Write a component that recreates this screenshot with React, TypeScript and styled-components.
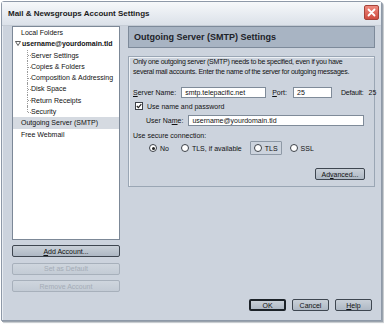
import React from 'react';
import styled, { createGlobalStyle, css } from 'styled-components';

const GlobalStyle = createGlobalStyle`
  html, body {
    margin: 0;
    padding: 0;
    background: #ffffff;
  }
  body {
    font-family: 'Liberation Sans', Arial, sans-serif;
    font-size: 7px;
    color: #111111;
  }
`;

const treeItems = [
  { label: 'Server Settings' },
  { label: 'Copies & Folders' },
  { label: 'Composition & Addressing' },
  { label: 'Disk Space' },
  { label: 'Return Receipts' },
  { label: 'Security' },
];

const radios = [
  { label: 'No', checked: true },
  { label: 'TLS, if available' },
  { label: 'TLS', focused: true },
  { label: 'SSL' },
];

export default function App() {
  return (
    <>
      <GlobalStyle />
      <Screen>
        <Window>
          <TitleBar>
            <Title>Mail &amp; Newsgroups Account Settings</Title>
            <CloseButton aria-label="Close">
              <svg width="9" height="9" viewBox="0 0 9 9">
                <path d="M1.5 1.5 L7.5 7.5 M7.5 1.5 L1.5 7.5" stroke="#ffffff" strokeWidth="1.8" strokeLinecap="round" />
              </svg>
            </CloseButton>
          </TitleBar>

          <Body>
            <Columns>
              <LeftColumn>
                <Tree>
                  <TreeRow>Local Folders</TreeRow>
                  <TreeRow $bold>
                    <Twisty>
                      <svg width="6" height="5" viewBox="0 0 6 5">
                        <path d="M0.5 0.5 H5.5 L3 4.5 Z" fill="none" stroke="#333" strokeWidth="0.8" />
                      </svg>
                    </Twisty>
                    username@yourdomain.tld
                  </TreeRow>
                  <Children>
                    {treeItems.map((item, i) => (
                      <ChildRow key={i} $last={i === treeItems.length - 1}>
                        {item.label}
                      </ChildRow>
                    ))}
                  </Children>
                  <TreeRow $selected>Outgoing Server (SMTP)</TreeRow>
                  <TreeRow>Free Webmail</TreeRow>
                </Tree>
                <SideButtons>
                  <Button $width={108}><u>A</u>dd Account...</Button>
                  <Button $width={108} $disabled>Set as Default</Button>
                  <Button $width={108} $disabled>Remove Account</Button>
                </SideButtons>
              </LeftColumn>

              <RightColumn>
                <Header>Outgoing Server (SMTP) Settings</Header>
                <GroupBox>
                  <Intro>
                    Only one outgoing server (SMTP) needs to be specified, even if you have
                    <br />
                    several mail accounts. Enter the name of the server for outgoing messages.
                  </Intro>
                  <FieldRow>
                    <Label><u>S</u>erver Name:</Label>
                    <TextField $width={85} $left={5}>smtp.telepacific.net</TextField>
                    <Label $left={6}><u>P</u>ort:</Label>
                    <TextField $width={39} $left={6}>25</TextField>
                    <Label $left={9} $tight>Default:</Label>
                    <Label $left={5}>25</Label>
                  </FieldRow>
                  <CheckRow>
                    <CheckBox>
                      <svg width="6" height="6" viewBox="0 0 6 6">
                        <path d="M0.8 3 L2.4 4.6 L5.3 1.2" fill="none" stroke="#222" strokeWidth="1.2" />
                      </svg>
                    </CheckBox>
                    Use name and password
                  </CheckRow>
                  <UserRow>
                    <Label>User Na<u>m</u>e:</Label>
                    <TextField $grow $left={5}>username@yourdomain.tld</TextField>
                  </UserRow>
                  <SectionLabel>Use secure connection:</SectionLabel>
                  <RadioRow>
                    {radios.map((r, i) => (
                      <RadioItem key={i} $focused={r.focused}>
                        <RadioCircle $checked={r.checked} />
                        {r.label}
                      </RadioItem>
                    ))}
                  </RadioRow>
                  <AdvancedRow>
                    <Button $width={50}>Ad<u>v</u>anced...</Button>
                  </AdvancedRow>
                </GroupBox>
              </RightColumn>
            </Columns>

            <Footer>
              <Button $width={37} $default>OK</Button>
              <Button $width={37}>Cancel</Button>
              <Button $width={37}><u>H</u>elp</Button>
            </Footer>
          </Body>
        </Window>
      </Screen>
    </>
  );
}

const Screen = styled.div`
  width: 384px;
  height: 324px;
  padding: 1px 0 0 1px;
  box-sizing: border-box;
  overflow: hidden;
`;

const Window = styled.div`
  width: 381px;
  height: 320px;
  box-sizing: border-box;
  display: flex;
  flex-direction: column;
  background: #ccd3dd;
  border: 1px solid #8e99a8;
  border-radius: 3px 3px 0 0;
  box-shadow: inset 1px 0 0 #e8ecf1, 1px 1px 0 #9aa3ad, 2px 2px 1px #c4c8cd;
`;

const TitleBar = styled.div`
  height: 23px;
  flex-shrink: 0;
  display: flex;
  align-items: center;
  justify-content: space-between;
  padding: 0 2px 0 6px;
  background: linear-gradient(#f6f8fa, #dbe1e9);
  border-bottom: 1px solid #c5ccd5;
`;

const Title = styled.div`
  font-weight: bold;
  font-size: 8px;
  color: #1b1b1b;
  margin-top: -1px;
`;

const CloseButton = styled.div`
  width: 15px;
  height: 15px;
  margin-top: -2px;
  box-sizing: border-box;
  display: flex;
  align-items: center;
  justify-content: center;
  border: 1px solid #a5433a;
  border-radius: 2px;
  background: linear-gradient(#ee8a7f, #cf4b3f);
`;

const Body = styled.div`
  flex: 1;
  display: flex;
  flex-direction: column;
  padding: 0 6px 9px 10px;
`;

const Columns = styled.div`
  display: flex;
  gap: 8px;
`;

const LeftColumn = styled.div`
  width: 108px;
  flex-shrink: 0;
  display: flex;
  flex-direction: column;
`;

const Tree = styled.div`
  height: 214px;
  box-sizing: border-box;
  background: #ffffff;
  border: 1px solid #7c8897;
  display: flex;
  flex-direction: column;
`;

const TreeRow = styled.div<{ $bold?: boolean; $selected?: boolean }>`
  height: 11.3px;
  line-height: 11.3px;
  display: flex;
  align-items: center;
  padding-left: ${(p) => (p.$bold ? 2 : 8)}px;
  white-space: nowrap;
  font-weight: ${(p) => (p.$bold ? 'bold' : 'normal')};
  ${(p) =>
    p.$selected &&
    css`
      background: #d5dae1;
    `}
`;

const Twisty = styled.span`
  display: inline-flex;
  width: 6px;
  margin-right: 1px;
`;

const Children = styled.div`
  display: flex;
  flex-direction: column;
  margin-left: 14px;
`;

const ChildRow = styled.div<{ $last?: boolean }>`
  position: relative;
  height: 11.3px;
  line-height: 11.3px;
  padding-left: 4px;
  white-space: nowrap;

  &::before {
    content: '';
    position: absolute;
    left: 0;
    top: 0;
    height: ${(p) => (p.$last ? '50%' : '100%')};
    border-left: 1px dotted #9a9a9a;
  }
  &::after {
    content: '';
    position: absolute;
    left: 1px;
    top: 50%;
    width: 3px;
    border-top: 1px dotted #9a9a9a;
  }
`;

const SideButtons = styled.div`
  display: flex;
  flex-direction: column;
  gap: 5.5px;
  margin-top: 5px;
`;

const Button = styled.div<{ $width: number; $disabled?: boolean; $default?: boolean }>`
  height: 12px;
  box-sizing: border-box;
  display: flex;
  align-items: center;
  justify-content: center;
  width: ${(p) => p.$width}px;
  border: 1px solid #3e4650;
  border-radius: 2px;
  background: linear-gradient(#c9d0d8, #aeb8c4);
  color: #111;
  font-size: 7px;
  white-space: nowrap;
  ${(p) =>
    p.$disabled &&
    css`
      border-color: #a7b0bb;
      color: #a5adb7;
      background: linear-gradient(#cfd6de, #c3cbd5);
    `}
  ${(p) =>
    p.$default &&
    css`
      border: 2px solid #1c2228;
    `}
`;

const RightColumn = styled.div`
  flex: 1;
  min-width: 0;
  display: flex;
  flex-direction: column;
  gap: 8px;
`;

const Header = styled.div`
  height: 22px;
  box-sizing: border-box;
  display: flex;
  align-items: center;
  padding-left: 5px;
  background: #a8b4c3;
  border: 1px solid #7d8a9a;
  font-weight: bold;
  font-size: 9px;
  color: #1d2229;
`;

const GroupBox = styled.div`
  height: 131px;
  box-sizing: border-box;
  border: 1px solid #9aa6b4;
  box-shadow: inset 1px 1px 0 #eef1f5;
  padding: 0 2px 0 4px;
  display: flex;
  flex-direction: column;
`;

const Intro = styled.div`
  line-height: 10px;
  letter-spacing: -0.25px;
  white-space: nowrap;
`;

const FieldRow = styled.div`
  display: flex;
  align-items: center;
  margin-top: 10px;
`;

const Label = styled.span<{ $left?: number; $tight?: boolean }>`
  flex-shrink: 0;
  white-space: nowrap;
  margin-left: ${(p) => p.$left ?? 0}px;
  ${(p) => p.$tight && 'letter-spacing: -0.2px;'}
`;

const TextField = styled.div<{ $width?: number; $grow?: boolean; $left?: number }>`
  height: 11px;
  box-sizing: border-box;
  flex-shrink: 0;
  width: ${(p) => (p.$width ? `${p.$width}px` : 'auto')};
  ${(p) => p.$grow && 'flex: 1;'}
  margin-left: ${(p) => p.$left ?? 0}px;
  background: #ffffff;
  border: 1px solid #7f8b99;
  padding-left: 3px;
  line-height: 9px;
  white-space: nowrap;
  overflow: hidden;
`;

const CheckRow = styled.div`
  display: flex;
  align-items: center;
  gap: 4px;
  margin-top: 4px;
  margin-left: 2px;
`;

const CheckBox = styled.span`
  width: 8px;
  height: 8px;
  box-sizing: border-box;
  display: inline-flex;
  align-items: center;
  justify-content: center;
  border: 1px solid #3b4048;
  background: #ffffff;
`;

const UserRow = styled.div`
  display: flex;
  align-items: center;
  margin-top: 5px;
  margin-left: 13px;
  margin-right: 8px;
`;

const SectionLabel = styled.div`
  margin-top: 6px;
`;

const RadioRow = styled.div`
  display: flex;
  align-items: center;
  gap: 4px;
  margin-top: 2px;
  margin-left: 12px;
`;

const RadioItem = styled.div<{ $focused?: boolean }>`
  display: flex;
  align-items: center;
  gap: 3px;
  height: 12px;
  padding: 0 3px;
  border: 1px solid ${(p) => (p.$focused ? '#8e99a6' : 'transparent')};
  border-radius: 1px;
  white-space: nowrap;
`;

const RadioCircle = styled.span<{ $checked?: boolean }>`
  width: 8px;
  height: 8px;
  box-sizing: border-box;
  border-radius: 50%;
  border: 1px solid #3b4048;
  background: #ffffff;
  display: inline-flex;
  align-items: center;
  justify-content: center;

  &::after {
    content: '';
    width: 3px;
    height: 3px;
    border-radius: 50%;
    background: ${(p) => (p.$checked ? '#222' : 'transparent')};
  }
`;

const AdvancedRow = styled.div`
  display: flex;
  justify-content: flex-end;
  margin-top: 13px;
  margin-right: 7px;
`;

const Footer = styled.div`
  margin-top: auto;
  display: flex;
  justify-content: flex-end;
  gap: 6px;
  padding-right: 3px;
`;
